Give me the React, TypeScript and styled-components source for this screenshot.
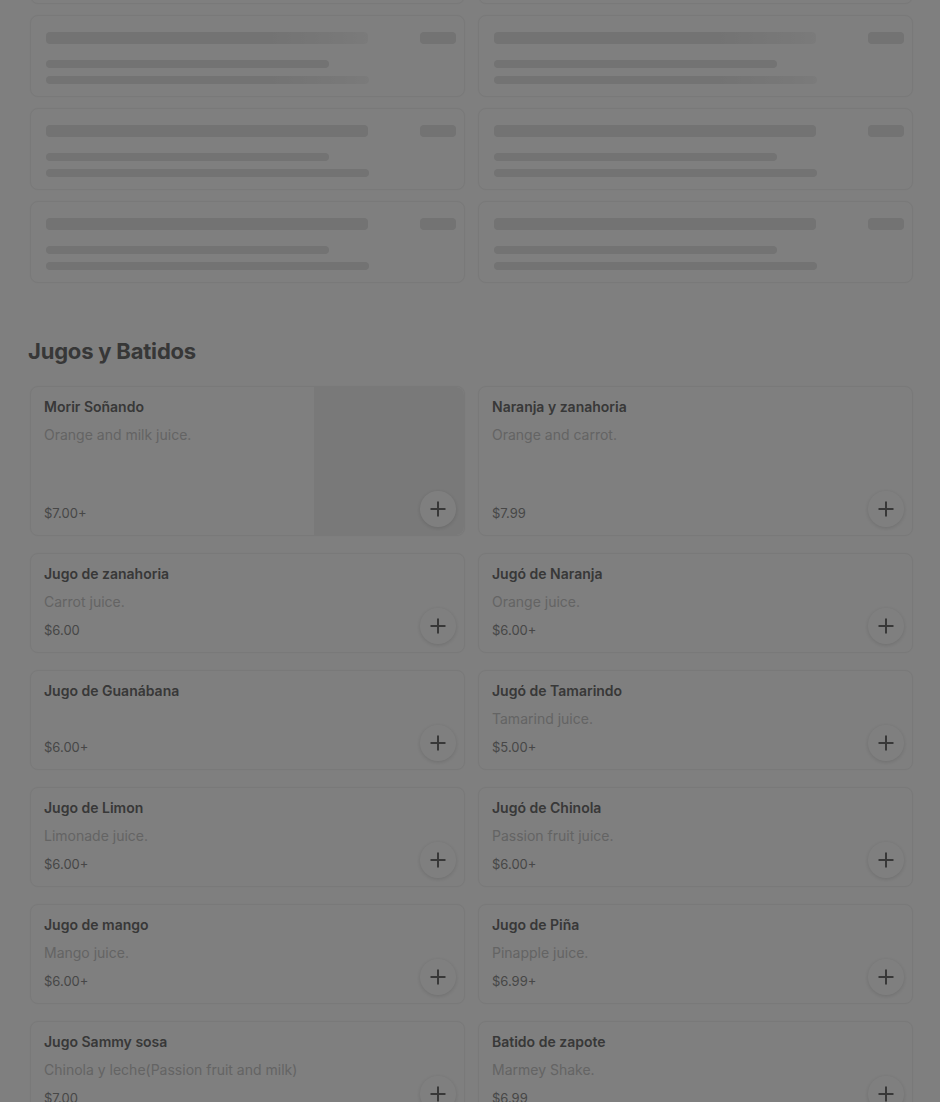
import React from "react";
import styled, { createGlobalStyle } from "styled-components";

const GlobalStyle = createGlobalStyle`
  html, body {
    margin: 0;
    padding: 0;
    background: #ffffff;
    overflow: hidden;
  }
  body {
    font-family: Inter, "Noto Sans", "Liberation Sans", sans-serif;
    color: #191919;
  }
`;

const Page = styled.main`
  margin-top: -78px;
  padding: 0 27px 40px 30px;
`;

const SkeletonGrid = styled.div`
  display: grid;
  grid-template-columns: 1fr 1fr;
  column-gap: 13px;
  row-gap: 11px;
`;

const SkeletonCard = styled.div`
  height: 82px;
  box-sizing: border-box;
  border: 1px solid #f2f2f2;
  border-radius: 8px;
  padding: 16px 8px 0 15px;
  display: flex;
  flex-direction: column;
  background: #fff;
  box-shadow: 0 0 2px rgba(0, 0, 0, 0.04);
`;

const SkeletonTop = styled.div`
  display: flex;
  justify-content: space-between;
  align-items: center;
`;

const Bar = styled.div<{ $w: number; $h: number; $shine?: boolean }>`
  width: ${(p) => p.$w}px;
  height: ${(p) => p.$h}px;
  border-radius: 4px;
  background: ${(p) =>
    p.$shine
      ? "linear-gradient(90deg, #e6e6e6 0%, #e6e6e6 68%, #f1f1f1 92%, #f6f6f6 100%)"
      : "#e6e6e6"};
`;

const SkeletonLines = styled.div`
  display: flex;
  flex-direction: column;
  gap: 8px;
  margin-top: 16px;
`;

const Heading = styled.h2`
  margin: 54px 0 21px -2px;
  font-size: 22px;
  line-height: 28px;
  font-weight: 700;
  letter-spacing: -0.2px;
  color: #6e6e6e;
`;

const ItemGrid = styled.div`
  display: grid;
  grid-template-columns: 1fr 1fr;
  column-gap: 13px;
  row-gap: 17px;
`;

const Card = styled.div`
  position: relative;
  display: flex;
  min-height: 100px;
  box-sizing: border-box;
  border: 1px solid #f3f3f3;
  border-radius: 8px;
  background: #fff;
  overflow: hidden;
  box-shadow: 0 0 2px rgba(0, 0, 0, 0.04);
`;

const Info = styled.div`
  flex: 1;
  display: flex;
  flex-direction: column;
  padding: 10px 16px 12px 13px;
`;

const Title = styled.div`
  font-size: 14px;
  line-height: 20px;
  font-weight: 600;
  color: #707070;
`;

const Desc = styled.div`
  margin-top: 8px;
  min-height: 20px;
  font-size: 14px;
  line-height: 20px;
  color: #c8c8c8;
`;

const Price = styled.div`
  margin-top: auto;
  padding-top: 8px;
  font-size: 13px;
  line-height: 20px;
  color: #8e8e8e;
`;

const Thumb = styled.div`
  width: 150px;
  height: 148px;
  flex-shrink: 0;
  background: #f3f3f3;
  border-radius: 0 8px 8px 0;
`;

const AddButton = styled.button`
  position: absolute;
  right: 8px;
  bottom: 8px;
  width: 36px;
  height: 36px;
  border-radius: 50%;
  border: none;
  padding: 0;
  background: #fff;
  box-shadow: 0 1px 4px rgba(0, 0, 0, 0.14);
  display: flex;
  align-items: center;
  justify-content: center;
`;

const Overlay = styled.div`
  position: fixed;
  inset: 0;
  background: rgba(0, 0, 0, 0.5);
  backdrop-filter: blur(0.5px);
`;

const items = [
  { name: "Morir Soñando", desc: "Orange and milk juice.", price: "$7.00+", image: true },
  { name: "Naranja y zanahoria", desc: "Orange and carrot.", price: "$7.99" },
  { name: "Jugo de zanahoria", desc: "Carrot juice.", price: "$6.00" },
  { name: "Jugó de Naranja", desc: "Orange juice.", price: "$6.00+" },
  { name: "Jugo de Guanábana", desc: "", price: "$6.00+" },
  { name: "Jugó de Tamarindo", desc: "Tamarind juice.", price: "$5.00+" },
  { name: "Jugo de Limon", desc: "Limonade juice.", price: "$6.00+" },
  { name: "Jugó de Chinola", desc: "Passion fruit juice.", price: "$6.00+" },
  { name: "Jugo de mango", desc: "Mango juice.", price: "$6.00+" },
  { name: "Jugo de Piña", desc: "Pinapple juice.", price: "$6.99+" },
  { name: "Jugo Sammy sosa", desc: "Chinola y leche(Passion fruit and milk)", price: "$7.00" },
  { name: "Batido de zapote", desc: "Marmey Shake.", price: "$6.99" },
];

const PlusIcon = () => (
  <svg width="16" height="16" viewBox="0 0 16 16" fill="none">
    <path d="M8 1.5v13M1.5 8h13" stroke="#707070" strokeWidth="2" strokeLinecap="square" />
  </svg>
);

const Skeleton = ({ shine }: { shine?: boolean }) => (
  <SkeletonCard>
    <SkeletonTop>
      <Bar $w={322} $h={12} $shine={shine} />
      <Bar $w={36} $h={12} />
    </SkeletonTop>
    <SkeletonLines>
      <Bar $w={283} $h={8} />
      <Bar $w={323} $h={8} $shine={shine} />
    </SkeletonLines>
  </SkeletonCard>
);

export default function App() {
  return (
    <>
      <GlobalStyle />
      <Page>
        <SkeletonGrid>
          {[0, 1, 2, 3].map((row) => (
            <React.Fragment key={row}>
              <Skeleton shine={row === 1} />
              <Skeleton shine={row === 1} />
            </React.Fragment>
          ))}
        </SkeletonGrid>

        <Heading>Jugos y Batidos</Heading>

        <ItemGrid>
          {items.map((item) => (
            <Card key={item.name}>
              <Info>
                <Title>{item.name}</Title>
                <Desc>{item.desc}</Desc>
                <Price>{item.price}</Price>
              </Info>
              {item.image && <Thumb />}
              <AddButton aria-label="Add">
                <PlusIcon />
              </AddButton>
            </Card>
          ))}
        </ItemGrid>
      </Page>
      <Overlay />
    </>
  );
}
